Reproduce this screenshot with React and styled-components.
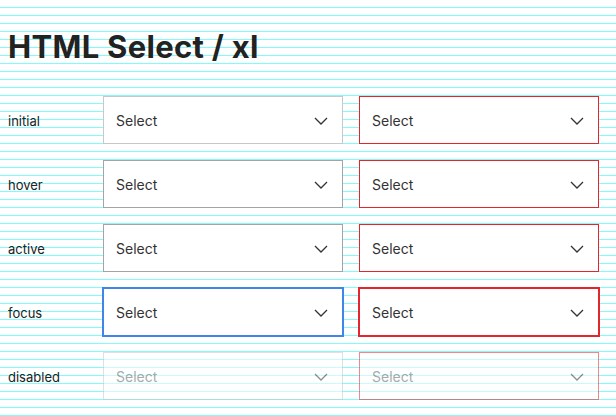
import React from 'react'
import styled, { createGlobalStyle, css } from 'styled-components'

const GlobalStyle = createGlobalStyle`
  html, body {
    margin: 0;
    padding: 0;
  }
  body {
    font-family: Inter, "Liberation Sans", sans-serif;
    color: #222;
    background-color: #fff;
    background-image: linear-gradient(to bottom, #80fcfc 0, #80fcfc 1px, #ffffff 1px, #ffffff 8px);
    background-size: 100% 8px;
    background-position: 0 7px;
    min-height: 416px;
  }
`

const Page = styled.div`
  padding: 27px 8px 0;
`

const Title = styled.h1`
  margin: 0 0 29px;
  font-size: 31px;
  line-height: 40px;
  font-weight: 700;
  letter-spacing: 0.3px;
  color: #222;
`

const Grid = styled.div`
  display: grid;
  grid-template-columns: 79px 240px 240px;
  column-gap: 16px;
  row-gap: 16px;
  align-items: center;
`

const Label = styled.div`
  font-size: 13px;
  line-height: 16px;
  color: #222;
  padding-top: 2px;
`

const Wrap = styled.div`
  position: relative;
  width: 240px;
  height: 48px;
  ${(p) => p.$disabled && css`opacity: 0.55;`}
`

const borderFor = (state, error) => {
  if (state === 'focus') return error ? '#e3262e' : '#3f86e8'
  if (error) return '#e3262e'
  if (state === 'hover' || state === 'active') return '#a4a4a8'
  return '#c8c8cc'
}

const Field = styled.select`
  appearance: none;
  -webkit-appearance: none;
  box-sizing: border-box;
  width: 100%;
  height: 100%;
  margin: 0;
  padding: 0 40px 0 12px;
  border: 1px solid ${(p) => borderFor(p.$state, p.$error)};
  border-radius: 0;
  background: #fff;
  font-family: Inter, "Liberation Sans", sans-serif;
  font-size: 14px;
  color: #333;
  outline: none;
  ${(p) =>
    p.$state === 'focus' &&
    css`
      box-shadow: 0 0 0 1px ${borderFor(p.$state, p.$error)};
    `}
  &:disabled {
    color: #666;
    background: #fff;
    opacity: 1;
  }
`

const Chevron = styled.svg`
  position: absolute;
  right: 15px;
  top: 21px;
  pointer-events: none;
`

const Select = ({ state, error }) => (
  <Wrap $disabled={state === 'disabled'}>
    <Field $state={state} $error={error} disabled={state === 'disabled'} defaultValue="">
      <option value="">Select</option>
    </Field>
    <Chevron width="14" height="8" viewBox="0 0 14 8" fill="none">
      <path d="M1 1l6 6 6-6" stroke="#333" strokeWidth="1.3" />
    </Chevron>
  </Wrap>
)

const states = ['initial', 'hover', 'active', 'focus', 'disabled']

export default function App() {
  return (
    <Page>
      <GlobalStyle />
      <Title>HTML Select / xl</Title>
      <Grid>
        {states.map((s) => (
          <React.Fragment key={s}>
            <Label>{s}</Label>
            <Select state={s} />
            <Select state={s} error />
          </React.Fragment>
        ))}
      </Grid>
    </Page>
  )
}
